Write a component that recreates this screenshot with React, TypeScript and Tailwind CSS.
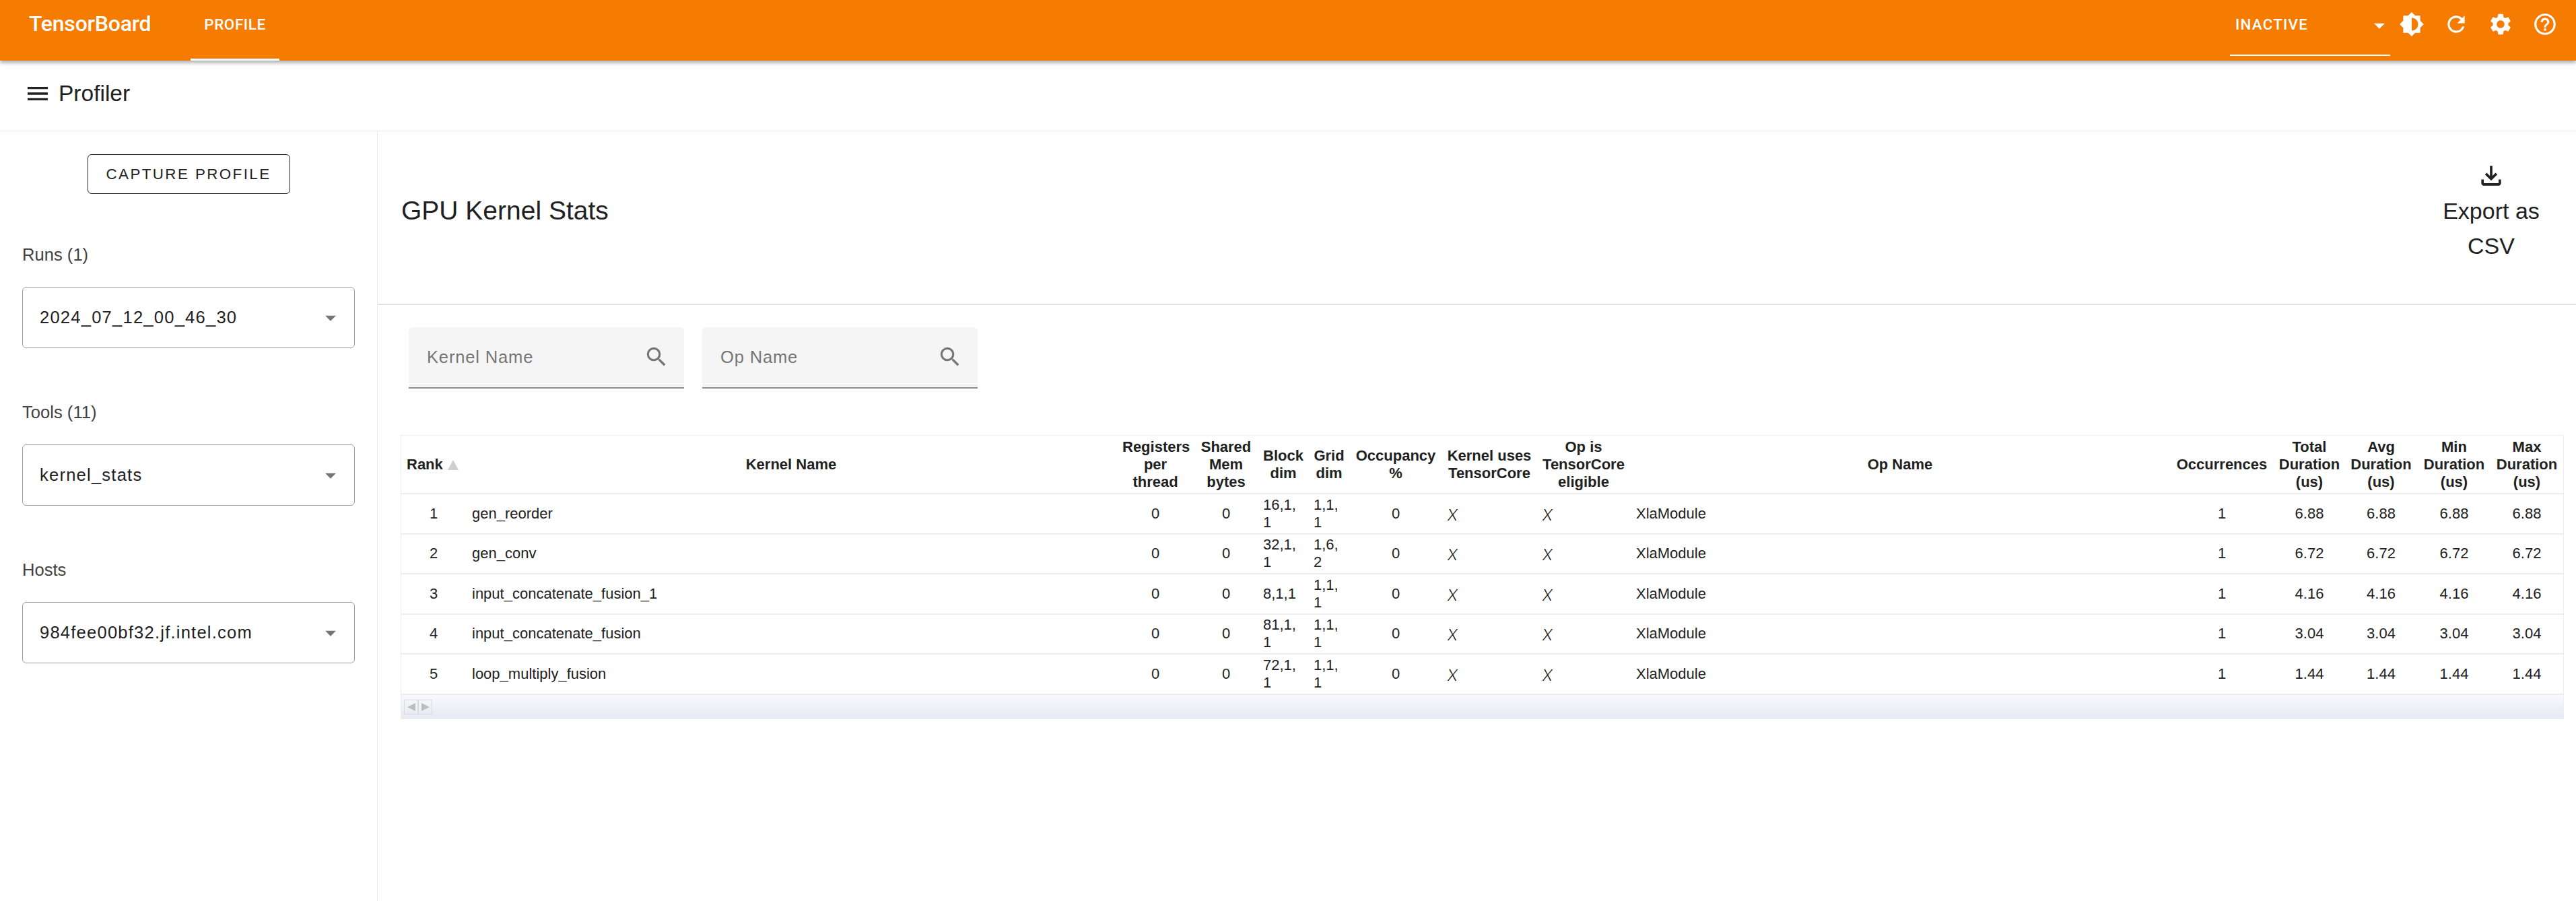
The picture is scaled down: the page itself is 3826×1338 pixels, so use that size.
import React from "react";
import {
  MdArrowDropDown,
  MdBrightness6,
  MdHelpOutline,
  MdMenu,
  MdOutlineFileDownload,
  MdRefresh,
  MdSearch,
  MdSettings,
} from "react-icons/md";

const selects = [
  { label: "Runs (1)", value: "2024_07_12_00_46_30" },
  { label: "Tools (11)", value: "kernel_stats" },
  { label: "Hosts", value: "984fee00bf32.jf.intel.com" },
];

const rows = [
  { rank: 1, name: "gen_reorder", block: "16,1,1", grid: "1,1,1", value: "6.88" },
  { rank: 2, name: "gen_conv", block: "32,1,1", grid: "1,6,2", value: "6.72" },
  { rank: 3, name: "input_concatenate_fusion_1", block: "8,1,1", grid: "1,1,1", value: "4.16" },
  { rank: 4, name: "input_concatenate_fusion", block: "81,1,1", grid: "1,1,1", value: "3.04" },
  { rank: 5, name: "loop_multiply_fusion", block: "72,1,1", grid: "1,1,1", value: "1.44" },
];

const colWidths = [96, 966, 116, 94, 76, 60, 138, 140, 140, 800, 156, 104, 109, 108, 108];

const headers = [
  "Kernel Name",
  "Registers per thread",
  "Shared Mem bytes",
  "Block dim",
  "Grid dim",
  "Occupancy %",
  "Kernel uses TensorCore",
  "Op is TensorCore eligible",
  "Op Name",
  "Occurrences",
  "Total Duration (us)",
  "Avg Duration (us)",
  "Min Duration (us)",
  "Max Duration (us)",
];

function FilterBox({ placeholder }: { placeholder: string }) {
  return (
    <div className="w-[409px] h-[91px] bg-[#f5f5f5] rounded-t-md border-b-2 border-[#8c8c8c] flex items-center pl-[27px] pr-[22px]">
      <span className="flex-1 text-[25.6px] tracking-[0.8px] text-[#757575]">{placeholder}</span>
      <MdSearch className="text-[#757575] -mt-[2px]" size={38} />
    </div>
  );
}

export default function App() {
  return (
    <div className="h-screen flex flex-col overflow-hidden bg-white text-[#212121] font-['Liberation_Sans',Arial,sans-serif]">
      {/* Top orange bar */}
      <header className="h-[90px] shrink-0 bg-[#f57c00] text-white flex shadow-[0_3px_6px_rgba(0,0,0,0.35)] relative z-10 font-['Roboto',sans-serif]">
        <div className="pl-[43px] w-[283px] pt-[15px] text-[32px] leading-[40px] font-medium tracking-[-0.2px]">
          TensorBoard
        </div>
        <div className="w-[132px] border-b-[3px] border-white text-center pt-[22px] text-[22.4px] leading-[28px] font-medium tracking-[0.6px]">
          PROFILE
        </div>
        <div className="flex-1" />
        <div className="w-[238px] h-[83px] border-b-2 border-white flex pl-[8px] pt-[22px] text-[22.4px] leading-[28px] font-medium tracking-[1.2px]">
          <span className="flex-1">INACTIVE</span>
          <MdArrowDropDown className="-mr-[3px] -mt-[3px]" size={38} />
        </div>
        <div className="flex pl-[13px] pr-[27px] pt-[17px] gap-[28px] h-[56px]">
          <MdBrightness6 size={38} />
          <MdRefresh size={38} />
          <MdSettings size={38} />
          <MdHelpOutline size={38} />
        </div>
      </header>

      {/* Profiler toolbar */}
      <div className="h-[105px] shrink-0 border-b border-[#ebebeb] flex items-center pl-[36px] pb-[6px] gap-[11px]">
        <MdMenu size={40} />
        <span className="text-[33.5px] leading-[40px]">Profiler</span>
      </div>

      <div className="flex-1 flex min-h-0">
        {/* Sidebar */}
        <aside className="w-[561px] shrink-0 border-r border-[#ebebeb] px-[33px] pt-[34px]">
          <div className="flex justify-center">
            <div className="w-[301px] h-[59px] border-[1.5px] border-[#212121] rounded-md flex items-center justify-center text-[22.4px] tracking-[2.4px]">
              CAPTURE PROFILE
            </div>
          </div>
          <div className="mt-[74px] flex flex-col gap-[79px]">
            {selects.map((s) => (
              <div key={s.label}>
                <div className="text-[25.6px] leading-[32px] mb-[32px] text-[#424242]">{s.label}</div>
                <div className="w-[494px] h-[91px] border-[1.5px] border-[#9e9e9e] rounded-md flex items-center pl-[25px] pr-[16px]">
                  <span className="flex-1 text-[25.6px] tracking-[1.2px]">{s.value}</span>
                  <MdArrowDropDown className="text-[#757575]" size={38} />
                </div>
              </div>
            ))}
          </div>
        </aside>

        <main className="flex-1 min-w-0">
          {/* Title row */}
          <div className="h-[258px] border-b-2 border-[#e0e0e0] flex pl-[35px] pr-[48px]">
            <h1 className="flex-1 self-center text-[39px] leading-[48px] font-normal -mt-[21px]">GPU Kernel Stats</h1>
            <div className="w-[156px] flex flex-col items-center pt-[44px]">
              <MdOutlineFileDownload size={44} />
              <div className="mt-[4px] text-[34px] leading-[52px] text-center">Export as CSV</div>
            </div>
          </div>

          {/* Filters */}
          <div className="flex gap-[27px] pt-[33px] pl-[46px]">
            <FilterBox placeholder="Kernel Name" />
            <FilterBox placeholder="Op Name" />
          </div>

          {/* Table */}
          <div className="ml-[34px] mt-[69px] w-[3213px] border border-[#eeeeee] text-[22px] leading-[26px]">
            <table className="table-fixed w-[3211px] border-collapse">
              <colgroup>
                {colWidths.map((w, i) => (
                  <col key={i} style={{ width: w }} />
                ))}
              </colgroup>
              <thead>
                <tr className="h-[86px] border-b-2 border-[#eeeeee] font-bold">
                  <th className="pl-[8px] text-left font-bold whitespace-nowrap">
                    Rank
                    <svg className="inline-block ml-[7px] align-[-1px]" width="16" height="15" viewBox="0 0 16 15">
                      <path d="M8 0L16 15H0z" fill="#cfcfcf" />
                    </svg>
                  </th>
                  {headers.map((h) => (
                    <th key={h} className={`text-center font-bold ${h.startsWith("Registers") ? "px-[9px]" : "px-[3px]"}`}>
                      {h}
                    </th>
                  ))}
                </tr>
              </thead>
              <tbody>
                {rows.map((r) => (
                  <tr key={r.rank} className="h-[59.5px] border-b-2 border-[#eeeeee]">
                    <td className="text-center">{r.rank}</td>
                    <td className="pl-[9px]">{r.name}</td>
                    <td className="text-center">0</td>
                    <td className="text-center">0</td>
                    <td className="pl-[8px] pr-[16px] break-all">{r.block}</td>
                    <td className="pl-[7px] pr-[13px] break-all">{r.grid}</td>
                    <td className="text-center">0</td>
                    <td className="pl-[8px] pt-[4px] font-['Roboto',sans-serif] font-light text-[24px]">
                      <span className="inline-block skew-x-[-8deg]">X</span>
                    </td>
                    <td className="pl-[9px] pt-[4px] font-['Roboto',sans-serif] font-light text-[24px]">
                      <span className="inline-block skew-x-[-8deg]">X</span>
                    </td>
                    <td className="pl-[8px]">XlaModule</td>
                    <td className="text-center">1</td>
                    <td className="text-center">{r.value}</td>
                    <td className="text-center">{r.value}</td>
                    <td className="text-center">{r.value}</td>
                    <td className="text-center">{r.value}</td>
                  </tr>
                ))}
              </tbody>
            </table>
            {/* Horizontal scroll strip */}
            <div className="h-[35px] bg-gradient-to-b from-[#f8f9fd] to-[#e6e9f2] flex pl-[4px] pt-[7px]">
              {["M12 0V12L0 6z", "M0 0V12L12 6z"].map((d) => (
                <div key={d} className="w-[21px] h-[22px] border border-[#d8dae0] flex items-center justify-center">
                  <svg width="12" height="12" viewBox="0 0 12 12">
                    <path d={d} fill="#bdbdbd" />
                  </svg>
                </div>
              ))}
            </div>
          </div>
        </main>
      </div>
    </div>
  );
}
